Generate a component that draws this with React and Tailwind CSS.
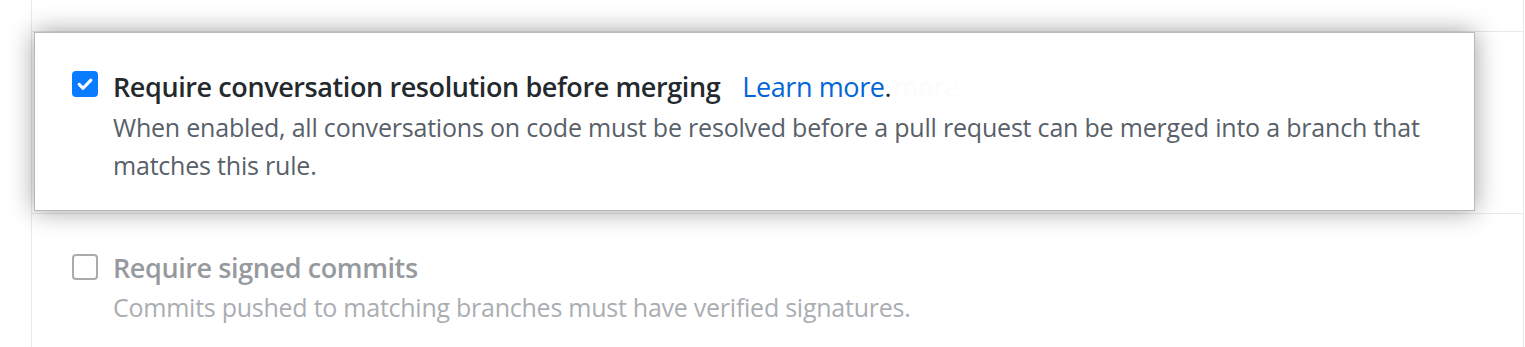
import React from 'react';

const font = { fontFamily: '"Open Sans", "Noto Sans", sans-serif' };

const CheckedBox = () => (
  <span className="mt-[1px] flex h-[26px] w-[26px] shrink-0 items-center justify-center rounded-[4px] bg-[#0a7cff]">
    <svg width="18" height="18" viewBox="0 0 16 16" fill="none">
      <path d="M2.8 8.4 6.3 11.8 13.2 4.6" stroke="white" strokeWidth="2.8" strokeLinecap="round" strokeLinejoin="round" />
    </svg>
  </span>
);

const EmptyBox = () => (
  <span className="mt-[3px] h-[26px] w-[26px] shrink-0 rounded-[4px] border-2 border-[#ababab] bg-white" />
);

const App = () => {
  return (
    <div className="h-[347px] w-[1525px] overflow-hidden bg-white" style={font}>
      <div className="ml-[31px] mr-[1px] flex h-full flex-col border-x border-[#eaeaea]">
        {/* row above, cut off */}
        <div className="h-[32px] border-b border-[#eaeaea]" />

        {/* highlighted rule */}
        <div className="h-[182px] border-b border-[#eaeaea] pl-[2px] pr-[48px]">
          <div className="relative z-10 h-[179px] border border-[#b8b8b8] bg-white shadow-[0_0_24px_rgba(0,0,0,0.38)] pl-[37px] pt-[37px]">
            <div className="flex items-start gap-[15px]">
              <CheckedBox />
              <div>
                <div className="flex items-baseline text-[27px] leading-[34px] tracking-[-0.4px]">
                  <span className="font-semibold text-[#24292e]">Require conversation resolution before merging</span>
                  <a className="ml-[22px] text-[#0366d6]">Learn more</a>
                  <span className="text-[#24292e]">.</span>
                  <span className="ml-[2px] text-[#fcfcfc]">more.</span>
                </div>
                <p className="mt-[4px] max-w-[1325px] text-[25px] leading-[38px] tracking-[-0.2px] text-[#586069]">
                  When enabled, all conversations on code must be resolved before a pull request can be merged into a branch that matches this rule.
                </p>
              </div>
            </div>
          </div>
        </div>

        {/* disabled rule */}
        <div className="flex items-start gap-[15px] pl-[40px] pt-[37px]">
          <EmptyBox />
          <div>
            <div className="text-[27px] font-semibold leading-[34px] tracking-[-0.4px] text-[#969a9e]">Require signed commits</div>
            <p className="mt-[7px] text-[25px] leading-[30px] tracking-[-0.25px] text-[#aaaeb2]">
              Commits pushed to matching branches must have verified signatures.
            </p>
          </div>
        </div>
      </div>
    </div>
  );
};

export default App;
